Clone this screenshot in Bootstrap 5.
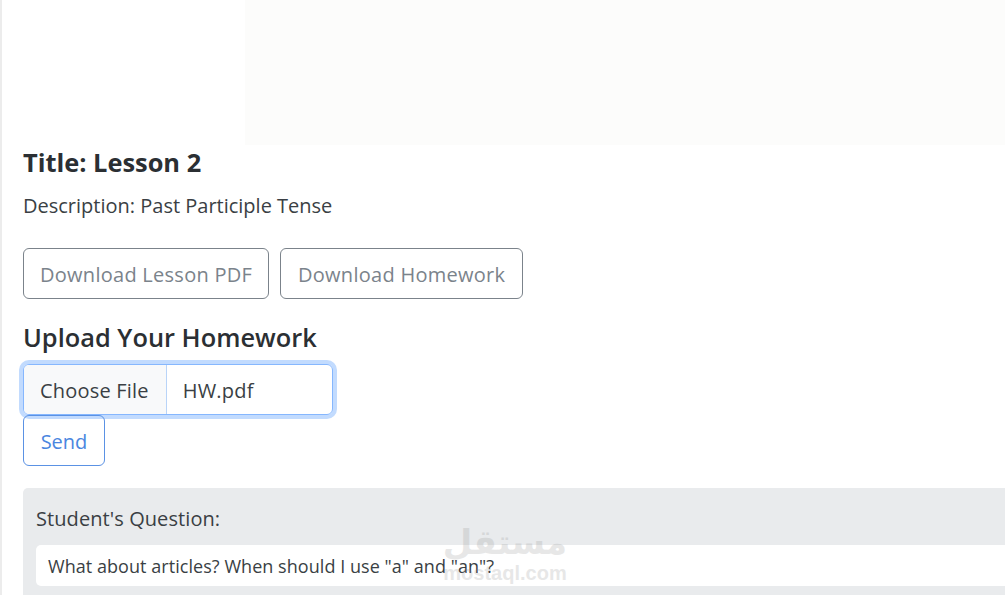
<!DOCTYPE html>
<html lang="en">
<head>
    <meta charset="UTF-8">
    <meta name="viewport" content="width=device-width, initial-scale=1">
    <title>Lesson 2</title>
    <link href="https://cdn.jsdelivr.net/npm/bootstrap@5.3.3/dist/css/bootstrap.min.css" rel="stylesheet">
    <style>
        html, body { height: 595px; overflow: hidden; }
        body { background: #fff; color: #2b2f33; font-family: "Open Sans", "Noto Sans", "Liberation Sans", sans-serif; }
        .page-wrap { position: relative; height: 595px; overflow: hidden; border-left: 2px solid #ececec; padding-left: 21px; }
        .video-area { height: 145px; margin-left: 222px; background: #fcfcfb; }
        .lesson-title { font-size: 25.4px; font-weight: 700; line-height: 32px; margin: 1px 0 0; }
        .lesson-desc { font-size: 20px; line-height: 30px; margin: 13px 0 27px; color: #3a3f44; }
        .dl-row { gap: 11px; }
        .dl-btn { height: 51px; font-size: 20px; line-height: 1; padding: 3px 16px 0; border-radius: 6px; color: #7b838b; border: 1px solid #7b838b; letter-spacing: .27px; }
        .hw-btn { width: 243px; justify-content: center; padding-left: 0; padding-right: 0; }
        .upload-title { font-size: 25.4px; font-weight: 600; line-height: 32px; margin: 22px 0 11px; }
        .file-box { width: 310px; height: 51px; border-radius: 6px; border: 1px solid #86b7fe; box-shadow: 0 0 0 4px #c2dbfe; font-size: 20px; letter-spacing: .2px; color: #3a3f44; overflow: hidden; }
        .file-btn { background: #f8f9fa; border-right: 1px solid #b9d4f8; padding: 0 17px 0 16px; line-height: 52px; }
        .file-name { padding: 0 16px; line-height: 52px; }
        .send-btn { display: block; height: 51px; width: 82px; padding: 3px 0 0; font-size: 20px; border-radius: 6px; color: #4a86e0; border: 1px solid #5b92e4; }
        .question-box { margin-top: 22px; background: #e9ebed; border-radius: 5px 0 0 5px; padding: 16px 13px 10px; height: 130px; }
        .question-label { font-size: 20px; line-height: 30px; margin-bottom: 11px; letter-spacing: .08px; color: #3a3f44; }
        .question-text { background: #fff; border-radius: 5px; height: 41px; line-height: 43px; padding: 0 12px; font-size: 18px; letter-spacing: .05px; margin-right: -20px; color: #3a3f44; }
        .wm { position: absolute; left: 440px; top: 518px; width: 126px; text-align: center; color: #8a8a8a; opacity: .2; pointer-events: none; }
        .wm-ar { font-family: "DejaVu Sans", sans-serif; font-weight: 700; font-size: 34px; line-height: 48px; }
        .wm-en { font-family: "Liberation Sans", sans-serif; font-weight: 700; font-size: 20px; line-height: 20px; margin-top: -3px; }
    </style>
</head>
<body>
<div class="page-wrap">
    <div class="video-area"></div>
    <h5 class="lesson-title">Title: Lesson 2</h5>
    <p class="lesson-desc">Description: Past Participle Tense</p>
    <div class="d-flex dl-row">
        <a href="#" class="btn btn-outline-secondary dl-btn d-flex align-items-center">Download Lesson PDF</a>
        <a href="#" class="btn btn-outline-secondary dl-btn hw-btn d-flex align-items-center">Download Homework</a>
    </div>
    <h5 class="upload-title">Upload Your Homework</h5>
    <div class="file-box d-flex">
        <span class="file-btn">Choose File</span>
        <span class="file-name">HW.pdf</span>
    </div>
    <button type="button" class="btn btn-outline-primary send-btn">Send</button>
    <div class="question-box">
        <div class="question-label">Student's Question:</div>
        <div class="question-text">What about articles? When should I use "a" and "an"?</div>
    </div>
    <div class="wm">
        <div class="wm-ar" dir="rtl" lang="ar">مستقل</div>
        <div class="wm-en">mostaql.com</div>
    </div>
</div>
<script src="https://cdn.jsdelivr.net/npm/bootstrap@5.3.3/dist/js/bootstrap.bundle.min.js"></script>
</body>
</html>
